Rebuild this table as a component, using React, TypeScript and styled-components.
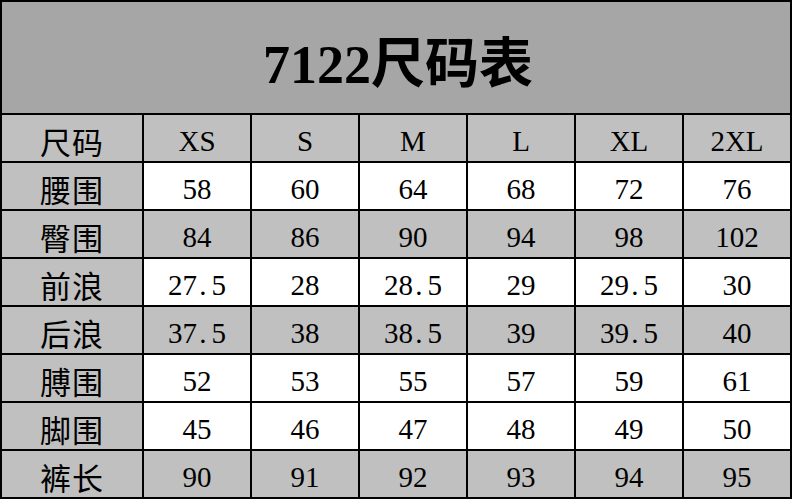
import React from 'react';
import styled, { createGlobalStyle } from 'styled-components';

/***** STYLES *****/
const GlobalStyle = createGlobalStyle`
    html, body {
        margin: 0;
        padding: 0;
        background: #ffffff;
    }
`;

const Chart = styled.div`
    display: grid;
    grid-template-columns: 140px repeat(6, 106px);
    grid-template-rows: 111px repeat(8, 46px);
    gap: 2px;
    padding: 2px;
    width: max-content;
    background: #000000;
    font-family: "Liberation Serif", "Noto Sans CJK SC", serif;
    color: #000000;
`;

const TitleCell = styled.div`
    grid-column: 1 / -1;
    display: flex;
    align-items: center;
    justify-content: center;
    background: #a6a6a6;
    font-size: 54px;
    font-weight: bold;
    padding-top: 4px;
    padding-left: 4px;
`;

const Cell = styled.div<{ $shade: boolean }>`
    display: flex;
    align-items: center;
    justify-content: center;
    background: ${(p) => (p.$shade ? '#c0c0c0' : '#ffffff')};
    font-size: 29px;
    white-space: nowrap;
    padding-top: 6px;
`;

const LabelCell = styled(Cell)`
    font-family: "Noto Sans CJK SC", sans-serif;
    font-size: 31px;
    letter-spacing: 1px;
    padding-top: 4px;
`;

const Dot = styled.span`
    display: inline-block;
    width: 0.5em;
    padding-left: 0.08em;
    box-sizing: border-box;
    text-align: left;
`;

/***** DATA *****/
const rows = [
    { label: '尺码', shade: true, values: ['XS', 'S', 'M', 'L', 'XL', '2XL'] },
    { label: '腰围', shade: false, values: ['58', '60', '64', '68', '72', '76'] },
    { label: '臀围', shade: true, values: ['84', '86', '90', '94', '98', '102'] },
    { label: '前浪', shade: false, values: ['27.5', '28', '28.5', '29', '29.5', '30'] },
    { label: '后浪', shade: true, values: ['37.5', '38', '38.5', '39', '39.5', '40'] },
    { label: '膊围', shade: false, values: ['52', '53', '55', '57', '59', '61'] },
    { label: '脚围', shade: false, values: ['45', '46', '47', '48', '49', '50'] },
    { label: '裤长', shade: true, values: ['90', '91', '92', '93', '94', '95'] },
];

// half-width period like the original spreadsheet font
const renderValue = (v: string) => {
    const [a, b] = v.split('.');
    if (b === undefined) return v;
    return (
        <>
            {a}
            <Dot>.</Dot>
            {b}
        </>
    );
};

/***** COMPONENT-FUNCTION *****/
const App = () => {
    return (
        <>
            <GlobalStyle />
            <Chart>
                <TitleCell>7122尺码表</TitleCell>
                {rows.map((row) => (
                    <React.Fragment key={row.label}>
                        <LabelCell $shade>{row.label}</LabelCell>
                        {row.values.map((v, i) => (
                            <Cell key={i} $shade={row.shade}>
                                {renderValue(v)}
                            </Cell>
                        ))}
                    </React.Fragment>
                ))}
            </Chart>
        </>
    );
};

/***** EXPORTS *****/
export default App;
